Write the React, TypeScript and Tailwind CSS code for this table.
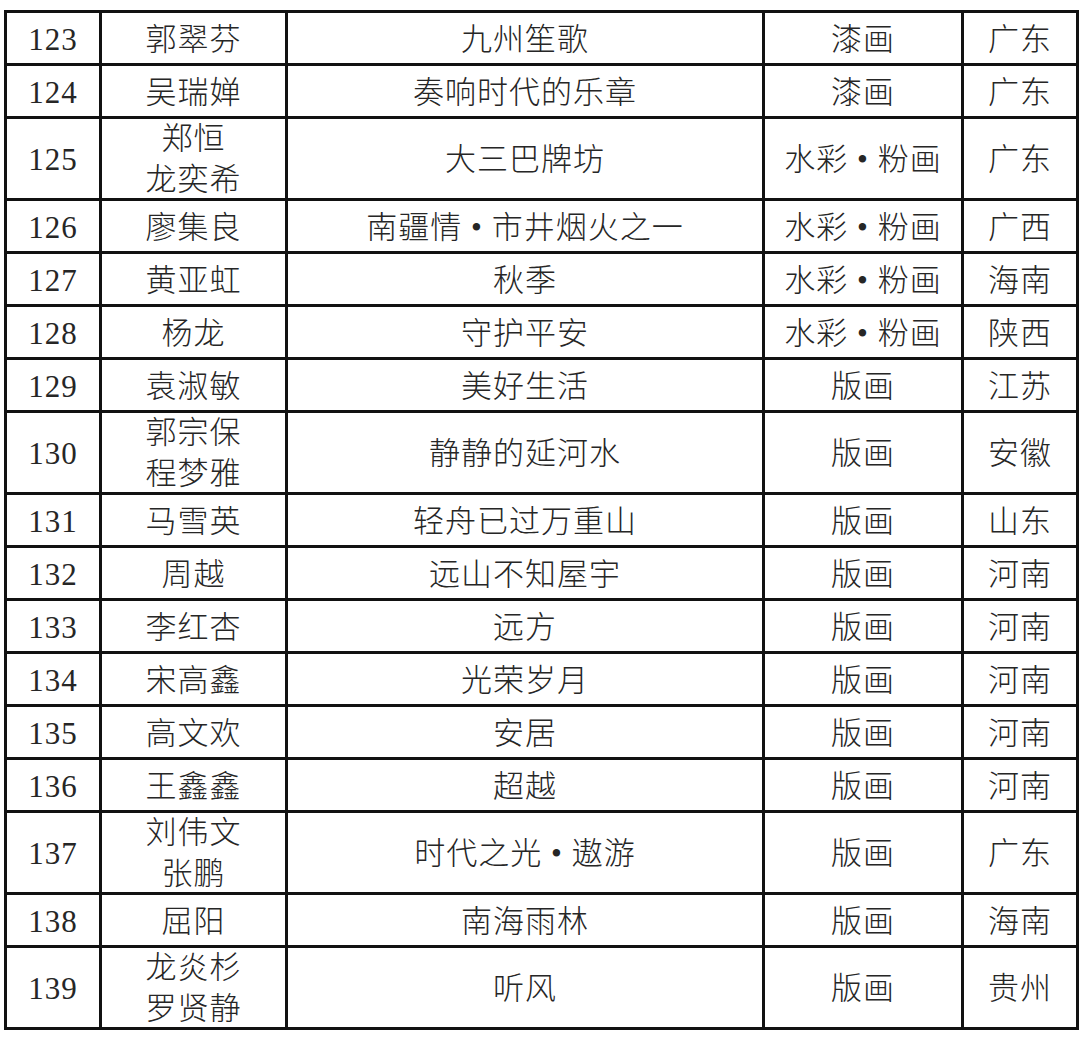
const rows: [string, string[], string, string, string][] = [
  ['123', ['郭翠芬'], '九州笙歌', '漆画', '广东'],
  ['124', ['吴瑞婵'], '奏响时代的乐章', '漆画', '广东'],
  ['125', ['郑恒', '龙奕希'], '大三巴牌坊', '水彩 • 粉画', '广东'],
  ['126', ['廖集良'], '南疆情 • 市井烟火之一', '水彩 • 粉画', '广西'],
  ['127', ['黄亚虹'], '秋季', '水彩 • 粉画', '海南'],
  ['128', ['杨龙'], '守护平安', '水彩 • 粉画', '陕西'],
  ['129', ['袁淑敏'], '美好生活', '版画', '江苏'],
  ['130', ['郭宗保', '程梦雅'], '静静的延河水', '版画', '安徽'],
  ['131', ['马雪英'], '轻舟已过万重山', '版画', '山东'],
  ['132', ['周越'], '远山不知屋宇', '版画', '河南'],
  ['133', ['李红杏'], '远方', '版画', '河南'],
  ['134', ['宋高鑫'], '光荣岁月', '版画', '河南'],
  ['135', ['高文欢'], '安居', '版画', '河南'],
  ['136', ['王鑫鑫'], '超越', '版画', '河南'],
  ['137', ['刘伟文', '张鹏'], '时代之光 • 遨游', '版画', '广东'],
  ['138', ['屈阳'], '南海雨林', '版画', '海南'],
  ['139', ['龙炎杉', '罗贤静'], '听风', '版画', '贵州'],
]

const cell = 'border-[3px] border-[#111] text-center align-middle p-0 pt-[3px]'
const nameCell = 'border-[3px] border-[#111] text-center align-middle p-0'

export default function App() {
  return (
    <div className="w-[1080px] h-[1039px] bg-white pt-[10px] pl-[4px] text-[#262626] text-[31px] font-light tracking-[1px] leading-[38px] [font-family:'Liberation_Serif','Noto_Sans_CJK_SC',serif]">
      <table className="table-fixed border-collapse w-[1072px]">
        <colgroup>
          <col className="w-[95px]" />
          <col className="w-[186px]" />
          <col className="w-[477px]" />
          <col className="w-[199px]" />
          <col className="w-[115px]" />
        </colgroup>
        <tbody>
          {rows.map(([no, names, title, kind, place]) => (
            <tr key={no} className={names.length > 1 ? 'h-[81px]' : 'h-[53px]'}>
              <td className={cell}>{no}</td>
              <td className={names.length > 1 ? nameCell : cell}>
                {names.length > 1 ? (
                  <div className="-my-[2px] pt-[1px] leading-[41px]">
                    {names.map(n => (
                      <div key={n}>{n}</div>
                    ))}
                  </div>
                ) : (
                  names[0]
                )}
              </td>
              <td className={cell}>{title}</td>
              <td className={cell}>{kind}</td>
              <td className={cell}>{place}</td>
            </tr>
          ))}
        </tbody>
      </table>
    </div>
  )
}
